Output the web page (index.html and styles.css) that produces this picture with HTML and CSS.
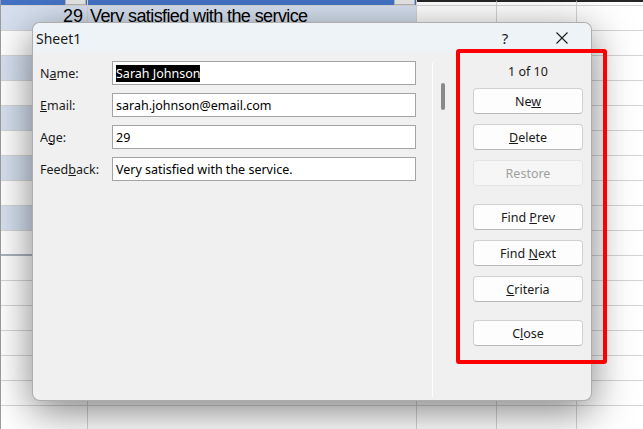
FILE: index.html
```html
<!DOCTYPE html>
<html lang="en">
<head>
    <meta charset="UTF-8">
    <meta name="viewport" content="width=device-width, initial-scale=1.0">
    <title>Sheet1 - Data Form</title>
    <link rel="stylesheet" href="styles.css">
</head>
<body>
    <div class="sheet">
        <div class="row head"><div class="c"><span class="filter"></span></div><div class="c"><span class="filter"></span></div><div class="c"></div><div class="c"></div><div class="c"></div></div>
        <div class="row band"><div class="c num">29</div><div class="c txt">Very satisfied with the service</div><div class="c"></div><div class="c"></div><div class="c"></div></div>
        <div class="row"><div class="c"></div><div class="c"></div><div class="c"></div><div class="c"></div><div class="c"></div></div>
        <div class="row band"><div class="c"></div><div class="c"></div><div class="c"></div><div class="c"></div><div class="c"></div></div>
        <div class="row"><div class="c"></div><div class="c"></div><div class="c"></div><div class="c"></div><div class="c"></div></div>
        <div class="row band"><div class="c"></div><div class="c"></div><div class="c"></div><div class="c"></div><div class="c"></div></div>
        <div class="row"><div class="c"></div><div class="c"></div><div class="c"></div><div class="c"></div><div class="c"></div></div>
        <div class="row band"><div class="c"></div><div class="c"></div><div class="c"></div><div class="c"></div><div class="c"></div></div>
        <div class="row"><div class="c"></div><div class="c"></div><div class="c"></div><div class="c"></div><div class="c"></div></div>
        <div class="row band"><div class="c"></div><div class="c"></div><div class="c"></div><div class="c"></div><div class="c"></div></div>
        <div class="row last"><div class="c"></div><div class="c"></div><div class="c"></div><div class="c"></div><div class="c"></div></div>
        <div class="row"><div class="c"></div><div class="c"></div><div class="c"></div><div class="c"></div><div class="c"></div></div>
        <div class="row"><div class="c"></div><div class="c"></div><div class="c"></div><div class="c"></div><div class="c"></div></div>
        <div class="row"><div class="c"></div><div class="c"></div><div class="c"></div><div class="c"></div><div class="c"></div></div>
        <div class="row"><div class="c"></div><div class="c"></div><div class="c"></div><div class="c"></div><div class="c"></div></div>
        <div class="row"><div class="c"></div><div class="c"></div><div class="c"></div><div class="c"></div><div class="c"></div></div>
        <div class="row"><div class="c"></div><div class="c"></div><div class="c"></div><div class="c"></div><div class="c"></div></div>
        <div class="row"><div class="c"></div><div class="c"></div><div class="c"></div><div class="c"></div><div class="c"></div></div>
    </div>

    <div class="dialog">
        <div class="titlebar">
            <span class="title">Sheet1</span>
            <span class="tb-btn help">?</span>
            <span class="tb-btn close">
                <svg width="12" height="12" viewBox="0 0 12 12"><path d="M0.5 0.5L11.5 11.5M11.5 0.5L0.5 11.5" stroke="#1b1b1b" stroke-width="1.1" fill="none"/></svg>
            </span>
        </div>
        <div class="dlg-body">
            <div class="fields">
                <div class="field"><label>N<u>a</u>me:</label><div class="input"><span class="sel">Sarah Johnson</span></div></div>
                <div class="field"><label><u>E</u>mail:</label><div class="input">sarah.johnson@email.com</div></div>
                <div class="field"><label>A<u>g</u>e:</label><div class="input">29</div></div>
                <div class="field"><label>Feed<u>b</u>ack:</label><div class="input">Very satisfied with the service.</div></div>
            </div>
            <div class="sep"></div>
            <div class="scroll"><div class="thumb"></div></div>
            <div class="actions">
                <div class="count">1 of 10</div>
                <button class="btn first">Ne<u>w</u></button>
                <button class="btn"><u>D</u>elete</button>
                <button class="btn" disabled>Restore</button>
                <button class="btn group">Find <u>P</u>rev</button>
                <button class="btn">Find <u>N</u>ext</button>
                <button class="btn"><u>C</u>riteria</button>
                <button class="btn group">C<u>l</u>ose</button>
            </div>
        </div>
    </div>

    <div class="callout"></div>
</body>
</html>
```

FILE: styles.css
```css
body {
    margin: 0;
    width: 643px;
    height: 429px;
    overflow: hidden;
    position: relative;
    background: #fff;
    font-family: "Noto Sans", sans-serif;
}

/* worksheet behind the dialog */
.sheet {
    border-left: 1px solid #9c9c9c;
}
.row {
    display: grid;
    grid-template-columns: 87px 329px 80px 80px 80px;
    height: 25px;
}
.row .c {
    box-sizing: border-box;
    border-right: 1px solid #d4d4d4;
    border-bottom: 1px solid #d4d4d4;
}
.row.head {
    height: 6px;
}
.head .c:nth-child(-n+2) {
    background: #4472c4;
    display: flex;
    justify-content: flex-end;
}
.head .c:nth-child(n+3) {
    border-top: 2px solid #262626;
}
.filter {
    width: 19px;
    height: 4px;
    margin-right: 1px;
    background: #e6e6e6;
    border: 1px solid #b5b5b5;
    border-top: none;
}
.band .c:nth-child(-n+2) {
    background: #d6e0ef;
}
.last .c:nth-child(-n+2) {
    border-bottom: 2px solid #aab2be;
}
.num, .txt {
    font-family: "Liberation Sans Narrow", "Liberation Sans", sans-serif;
    font-size: 18px;
    line-height: 19px;
    padding-top: 1px;
    color: #000;
}
.num {
    text-align: right;
    padding-right: 4px;
}
.txt {
    padding-left: 2px;
    letter-spacing: -0.6px;
    white-space: nowrap;
    overflow: hidden;
}

/* data form dialog */
.dialog {
    position: absolute;
    left: 32px;
    top: 22px;
    width: 560px;
    height: 379px;
    box-sizing: border-box;
    border: 1px solid rgba(0, 0, 0, 0.28);
    border-radius: 8px;
    background: #f0f0f0;
    box-shadow: 0 10px 40px rgba(0, 0, 0, 0.5);
    overflow: hidden;
    display: flex;
    flex-direction: column;
    color: #1a1a1a;
}
.titlebar {
    height: 30px;
    flex-shrink: 0;
    background: #eef3f7;
    display: flex;
    align-items: center;
}
.title {
    flex: 1;
    padding-left: 3px;
    font-size: 14px;
}
.tb-btn {
    height: 30px;
    display: flex;
    align-items: center;
    justify-content: center;
}
.help {
    width: 56px;
    font-size: 15px;
}
.close {
    width: 58px;
}
.dlg-body {
    flex: 1;
    display: flex;
}
.fields {
    width: 392px;
    padding: 8px 0 0 7px;
}
.field {
    display: flex;
    align-items: center;
    height: 24px;
    margin-bottom: 8px;
}
.field label {
    width: 72px;
    font-size: 12.5px;
}
.input {
    width: 304px;
    height: 24px;
    box-sizing: border-box;
    border: 1px solid #a3a3a3;
    background: #fff;
    padding-left: 3px;
    display: flex;
    align-items: center;
    font-size: 12.5px;
    color: #000;
    white-space: nowrap;
}
.sel {
    background: #000;
    color: #fff;
}
.sep {
    width: 1px;
    background: #fff;
    margin: 10px 0 3px;
}
.scroll {
    width: 23px;
}
.thumb {
    margin: 30px 0 0 8px;
    width: 4px;
    height: 27px;
    border-radius: 2px;
    background: #8a8a8a;
}
.actions {
    width: 135px;
    box-sizing: border-box;
    padding-left: 17px;
    display: flex;
    flex-direction: column;
}
.count {
    width: 110px;
    margin-top: 10px;
    line-height: 18px;
    font-size: 12.5px;
    text-align: center;
}
.btn {
    width: 110px;
    height: 26px;
    margin-top: 10px;
    padding: 0;
    border: 1px solid #d0d0d0;
    border-bottom-color: #b9b9b9;
    border-radius: 4px;
    background: #fdfdfd;
    font-family: "Noto Sans", sans-serif;
    font-size: 12.5px;
    color: #1a1a1a;
}
.btn.first {
    margin-top: 7px;
}
.btn.group {
    margin-top: 18px;
}
.btn:disabled {
    background: #f6f6f6;
    border-color: #e4e4e4;
    color: #a0a0a0;
}

/* red annotation frame */
.callout {
    position: absolute;
    left: 456px;
    top: 49px;
    width: 151px;
    height: 315px;
    box-sizing: border-box;
    border: 4px solid #ff0000;
    border-radius: 3px;
}
```
